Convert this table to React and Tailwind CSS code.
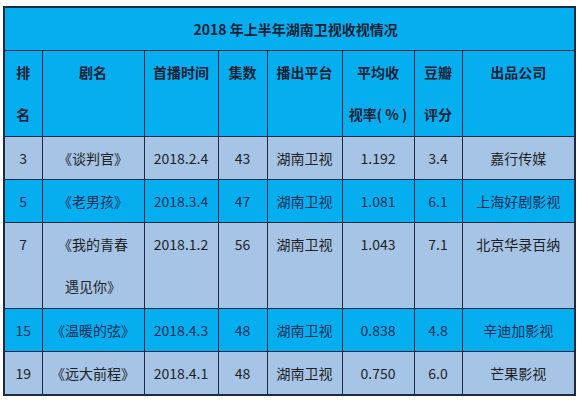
import React from "react";

const rows = [
  { rank: "3", name: ["《谈判官》"], date: "2018.2.4", eps: "43", rating: "1.192", score: "3.4", company: "嘉行传媒", hi: false },
  { rank: "5", name: ["《老男孩》"], date: "2018.3.4", eps: "47", rating: "1.081", score: "6.1", company: "上海好剧影视", hi: true },
  { rank: "7", name: ["《我的青春", "遇见你》"], date: "2018.1.2", eps: "56", rating: "1.043", score: "7.1", company: "北京华录百纳", hi: false },
  { rank: "15", name: ["《温暖的弦》"], date: "2018.4.3", eps: "48", rating: "0.838", score: "4.8", company: "辛迪加影视", hi: true },
  { rank: "19", name: ["《远大前程》"], date: "2018.4.1", eps: "48", rating: "0.750", score: "6.0", company: "芒果影视", hi: false },
];

const cell = "border border-[#1d2a45] text-center align-top leading-[42px] p-0 whitespace-nowrap";
const head = `${cell} font-bold text-[#1a2236]`;

export default function App() {
  return (
    <div
      className="bg-white w-[580px] h-[402px] pt-[6px] pl-[3px]"
      style={{ fontFamily: '"Noto Sans CJK SC", "Noto Sans", sans-serif' }}
    >
      <table className="table-fixed border-collapse w-[571px] text-[14px] text-[#1f1f24] border-2 border-[#1d2a45]">
        <colgroup>
          <col className="w-[38px]" />
          <col className="w-[102px]" />
          <col className="w-[74px]" />
          <col className="w-[49px]" />
          <col className="w-[75px]" />
          <col className="w-[72px]" />
          <col className="w-[48px]" />
          <col className="w-[113px]" />
        </colgroup>
        <thead>
          <tr className="bg-[#04aeef] h-[42px]">
            <th colSpan={8} className={`${head} pl-[12px]`}>
              2018 年上半年湖南卫视收视情况
            </th>
          </tr>
          <tr className="bg-[#04aeef] h-[86px]">
            <th className={head}>排<br />名</th>
            <th className={head}>剧名</th>
            <th className={head}>首播时间</th>
            <th className={head}>集数</th>
            <th className={head}>播出平台</th>
            <th className={head}>平均收<br />视率( % )</th>
            <th className={head}>豆瓣<br />评分</th>
            <th className={head}>出品公司</th>
          </tr>
        </thead>
        <tbody>
          {rows.map((r) => (
            <tr
              key={r.rank}
              className={`${r.hi ? "bg-[#04aeef] text-[#16305a]" : "bg-[#a6c4e6]"} ${r.name.length > 1 ? "h-[86px]" : "h-[42px]"}`}
            >
              <td className={cell}>{r.rank}</td>
              <td className={cell}>
                {r.name.map((n, i) => (
                  <div key={i}>{n}</div>
                ))}
              </td>
              <td className={cell}>{r.date}</td>
              <td className={cell}>{r.eps}</td>
              <td className={cell}>湖南卫视</td>
              <td className={cell}>{r.rating}</td>
              <td className={cell}>{r.score}</td>
              <td className={cell}>{r.company}</td>
            </tr>
          ))}
        </tbody>
      </table>
    </div>
  );
}
